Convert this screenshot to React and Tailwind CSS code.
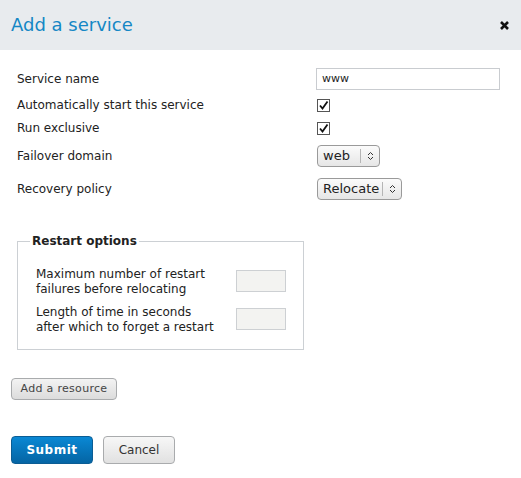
import React from "react";

const Check = () => (
  <div className="w-[13px] h-[13px] border border-[#555] bg-white flex items-center justify-center">
    <svg width="11" height="11" viewBox="0 0 11 11">
      <path d="M2 5.5 L4.5 8.5 L9.5 1.5" fill="none" stroke="#111" strokeWidth="1.8" />
    </svg>
  </div>
);

const Select = ({ value, width }) => (
  <div
    className={`${width} h-[22px] flex items-center border border-[#9a9a9a] rounded-[4px] bg-gradient-to-b from-[#fbfbfb] to-[#e6e6e6] text-[13px] text-[#222]`}
  >
    <span className="pl-[5px] flex-1">{value}</span>
    <div className="w-px h-[14px] bg-[#b5b5b5]" />
    <div className="w-[18px] flex justify-center">
      <svg width="7" height="10" viewBox="0 0 7 10">
        <path d="M1 4 L3.5 1.5 L6 4 M1 6 L3.5 8.5 L6 6" fill="none" stroke="#333" strokeWidth="1" />
      </svg>
    </div>
  </div>
);

export default function App() {
  return (
    <div className="w-[521px] h-[478px] bg-white font-['DejaVu_Sans',sans-serif] text-[#222]">
      <div className="h-[50px] bg-[#e8ebee] flex items-center justify-between pl-[11px] pr-[12px]">
        <h1 className="text-[18px] text-[#1487c5] leading-none">Add a service</h1>
        <svg width="9" height="9" viewBox="0 0 9 9" className="mt-[1px]">
          <path d="M1 1 L8 8 M8 1 L1 8" stroke="#111" strokeWidth="2.6" />
        </svg>
      </div>

      <div className="pl-[17px] pt-[18px] text-[12px]">
        <div className="flex items-center h-[22px]">
          <div className="w-[299px]">Service name</div>
          <div className="w-[184px] h-[22px] border border-[#c9ccd0] flex items-center pl-[5px] text-[11px]">www</div>
        </div>
        <div className="flex items-center h-[18px] mt-[6px]">
          <div className="w-[300px]">Automatically start this service</div>
          <Check />
        </div>
        <div className="flex items-center h-[18px] mt-[5px]">
          <div className="w-[300px]">Run exclusive</div>
          <Check />
        </div>
        <div className="flex items-center h-[22px] mt-[8px]">
          <div className="w-[300px]">Failover domain</div>
          <Select value="web" width="w-[63px]" />
        </div>
        <div className="flex items-center h-[22px] mt-[11px]">
          <div className="w-[300px]">Recovery policy</div>
          <Select value="Relocate" width="w-[85px]" />
        </div>

        <fieldset className="mt-[32px] w-[287px] h-[118px] border border-[#ccd0d4] pl-[18px] pr-[17px] pt-[17px] m-0">
          <legend className="font-bold px-[2px] ml-[-6px] text-[12px]">Restart options</legend>
          <div className="flex items-start justify-between h-[30px]">
            <div className="leading-[15px]">
              Maximum number of restart<br />failures before relocating
            </div>
            <div className="w-[50px] h-[22px] mt-[3px] border border-[#cdd0d3] bg-[#f3f3f1]" />
          </div>
          <div className="flex items-start justify-between h-[30px] mt-[8px]">
            <div className="leading-[15px]">
              Length of time in seconds<br />after which to forget a restart
            </div>
            <div className="w-[50px] h-[22px] mt-[3px] border border-[#cdd0d3] bg-[#f3f3f1]" />
          </div>
        </fieldset>
      </div>

      <div className="pl-[11px] mt-[25px]">
        <button className="w-[106px] h-[22px] border border-[#a9abad] rounded-[4px] bg-gradient-to-b from-[#f3f3f3] to-[#dcdcdc] text-[11px] tracking-[0.3px] text-[#444] font-['DejaVu_Sans',sans-serif]">
          Add a resource
        </button>
      </div>

      <div className="pl-[11px] mt-[36px] flex gap-[10px]">
        <button className="w-[82px] h-[28px] border border-[#0b5d94] rounded-[4px] bg-gradient-to-b from-[#0a88d4] to-[#0565a4] text-white font-bold text-[12px] tracking-[0.5px]">
          Submit
        </button>
        <button className="w-[72px] h-[28px] border border-[#a9abad] rounded-[4px] bg-gradient-to-b from-[#f7f7f7] to-[#e1e1e1] text-[#333] text-[12px]">
          Cancel
        </button>
      </div>
    </div>
  );
}
